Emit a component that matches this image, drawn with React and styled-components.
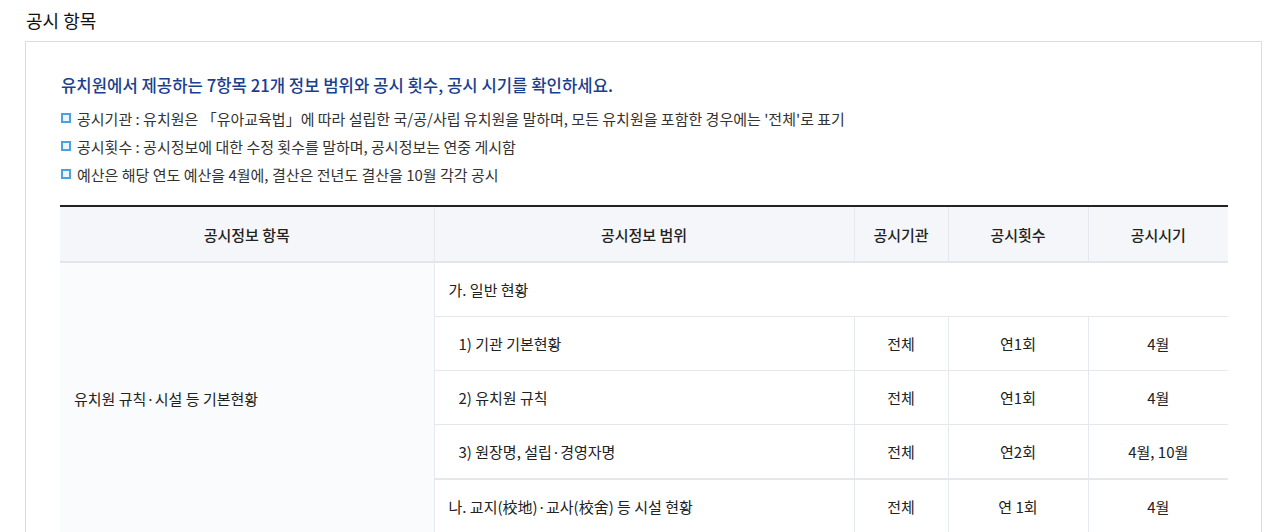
import React from "react";
import styled, { createGlobalStyle } from "styled-components";

const GlobalStyle = createGlobalStyle`
  body {
    margin: 0;
    background: #fff;
    font-family: "Noto Sans CJK KR", "Noto Sans", sans-serif;
    color: #222;
  }
`;

const Page = styled.div`
  padding: 8px 18px 0 25px;
`;

const PageTitle = styled.h2`
  margin: 0 0 9px 1px;
  font-size: 18px;
  line-height: 24px;
  font-weight: 400;
  color: #111;
`;

const Box = styled.div`
  border: 1px solid #dcdcdc;
  padding: 31px 33px 0 35px;
`;

const Lead = styled.p`
  margin: 0 0 8px;
  font-size: 16.7px;
  line-height: 24px;
  font-weight: 500;
  color: #1b3f8f;
`;

const Notes = styled.ul`
  list-style: none;
  margin: 0 0 16px;
  padding: 0;
`;

const Note = styled.li`
  display: flex;
  align-items: center;
  gap: 6px;
  font-size: 15px;
  line-height: 28px;
  color: #333;

  &::before {
    content: "";
    flex: none;
    width: 6px;
    height: 6px;
    border: 2px solid #4aa3e0;
    background: #eaf5fd;
    margin-top: -2px;
  }
`;

const Table = styled.table`
  width: 1168px;
  margin-left: -1px;
  border-collapse: collapse;
  table-layout: fixed;
  border-top: 2px solid #222;
  font-size: 15px;
  color: #222;
`;

const Th = styled.th`
  height: 52px;
  background: #f4f6f9;
  font-weight: 500;
  border-bottom: 2px solid #e2e5ea;
  border-left: 1px solid #e5e8ec;
  &:first-child {
    border-left: none;
  }
`;

const Td = styled.td`
  height: 53px;
  padding: 0 0 0 ${(p) => p.$indent || 0}px;
  text-align: ${(p) => (p.$left ? "left" : "center")};
  border-bottom: ${(p) => (p.$thick ? 2 : 1)}px solid #e4e7eb;
  border-left: 1px solid #e5e8ec;
  background: #fff;
`;

const GroupCell = styled.td`
  padding: 0 0 0 14px;
  background: #f9fbfd;
  vertical-align: middle;
  text-align: left;
`;

const rows = [
  { name: "1) 기관 기본현황", org: "전체", count: "연1회", when: "4월" },
  { name: "2) 유치원 규칙", org: "전체", count: "연1회", when: "4월" },
  { name: "3) 원장명, 설립·경영자명", org: "전체", count: "연2회", when: "4월, 10월", thick: true },
];

export default function App() {
  return (
    <Page>
      <GlobalStyle />
      <PageTitle>공시 항목</PageTitle>
      <Box>
        <Lead>유치원에서 제공하는 7항목 21개 정보 범위와 공시 횟수, 공시 시기를 확인하세요.</Lead>
        <Notes>
          <Note>공시기관 : 유치원은 「유아교육법」에 따라 설립한 국/공/사립 유치원을 말하며, 모든 유치원을 포함한 경우에는 '전체'로 표기</Note>
          <Note>공시횟수 : 공시정보에 대한 수정 횟수를 말하며, 공시정보는 연중 게시함</Note>
          <Note>예산은 해당 연도 예산을 4월에, 결산은 전년도 결산을 10월 각각 공시</Note>
        </Notes>
        <Table>
          <colgroup>
            <col style={{ width: 374 }} />
            <col style={{ width: 420 }} />
            <col style={{ width: 94 }} />
            <col style={{ width: 140 }} />
            <col style={{ width: 140 }} />
          </colgroup>
          <thead>
            <tr>
              <Th>공시정보 항목</Th>
              <Th>공시정보 범위</Th>
              <Th>공시기관</Th>
              <Th>공시횟수</Th>
              <Th>공시시기</Th>
            </tr>
          </thead>
          <tbody>
            <tr>
              <GroupCell rowSpan={5}>유치원 규칙·시설 등 기본현황</GroupCell>
              <Td colSpan={4} $left $indent={14}>가. 일반 현황</Td>
            </tr>
            {rows.map((r) => (
              <tr key={r.name}>
                <Td $left $indent={24} $thick={r.thick}>{r.name}</Td>
                <Td $thick={r.thick}>{r.org}</Td>
                <Td $thick={r.thick}>{r.count}</Td>
                <Td $thick={r.thick}>{r.when}</Td>
              </tr>
            ))}
            <tr>
              <Td $left $indent={14}>나. 교지(校地)·교사(校舍) 등 시설 현황</Td>
              <Td>전체</Td>
              <Td>연 1회</Td>
              <Td>4월</Td>
            </tr>
          </tbody>
        </Table>
      </Box>
    </Page>
  );
}
